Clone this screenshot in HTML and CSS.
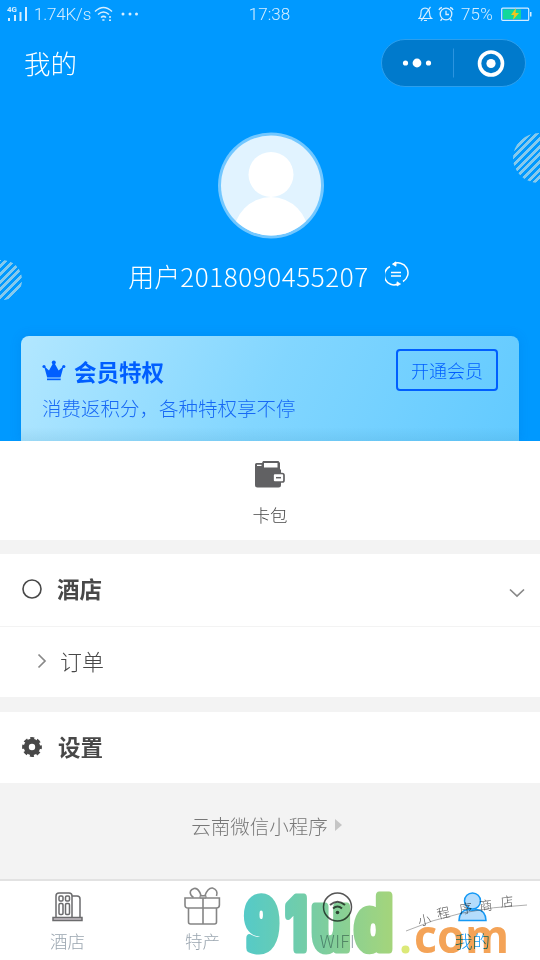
FILE: index.html
```
<!DOCTYPE html>
<html lang="zh-CN">
<head>
<meta charset="utf-8">
<title>我的</title>
<link rel="stylesheet" href="styles.css">
</head>
<body>
<header class="hero">
  <div class="status">
    <div class="status-left">
      <svg width="22" height="16" viewBox="0 0 22 16" fill="#d5eeff"><text x="0" y="6" class="net">4G</text><path d="M1 12h2v3H1zM7 9h2v6H7zM12.500 6h2v9h-2zM18 1h2v14h-2z"/></svg>
      <span class="speed">1.74K/s</span>
      <svg class="wifi" width="20" height="16" viewBox="0 0 20 16" fill="none" stroke="#d5eeff" stroke-width="1.500"><path d="M1 5.500Q9.500-2.500 18 5.500M4 8.500q5.500-5 11 0M7 11.500q2.500-2.200 5 0"/><path d="M8.300 14h2.200M15 11h2M15 14.200h2"/></svg>
      <svg width="18" height="4" viewBox="0 0 18 4" fill="#d5eeff"><circle cx="2" cy="2" r="1.500"/><circle cx="9" cy="2" r="1.500"/><circle cx="15.500" cy="2" r="1.500"/></svg>
    </div>
    <span class="clock">17:38</span>
    <div class="status-right">
      <svg width="15" height="16" viewBox="0 0 15 16" fill="none" stroke="#d5eeff" stroke-width="1.200"><path d="M1 12.500q2-1.500 2-6 0-4 4-4.500 4.500.5 4.500 5 0 4 2 5.500zM6 14.500h3M12.500.8 3 15"/></svg>
      <svg width="16" height="16" viewBox="0 0 16 16" fill="none" stroke="#d5eeff" stroke-width="1.300"><circle cx="8" cy="8" r="5.800"/><path d="M8 4.800V8.500h3M1 4q.5-2 3-2.500M15 4q-.5-2-3-2.500M4 13l-1.500 1.700M12 13l1.500 1.700"/></svg>
      <span class="percent">75%</span>
      <svg width="31" height="15" viewBox="0 0 31 15"><rect x=".7" y="1.200" width="27" height="12.200" rx="1" fill="none" stroke="#d5eeff" stroke-width="1.200"/><path d="M2 2.500h18v9.600H2z" fill="#12d89b"/><path d="M29 5h1.500v4.500H29z" fill="#d5eeff"/><path d="m15 1-5 7h3l-1 5 6-7h-3.500z" fill="#f4c51c"/></svg>
    </div>
  </div>
  <div class="nav">
    <h1>我的</h1>
    <div class="capsule">
      <svg width="143" height="46" viewBox="0 0 143 46"><g fill="#fff"><circle cx="23.500" cy="23" r="2.600"/><circle cx="35" cy="23" r="4.400"/><circle cx="46.500" cy="23" r="2.600"/><circle cx="109" cy="23.500" r="4.600"/></g><path d="M71.500 8.500v29" stroke="#2c94df"/><circle cx="109" cy="23.500" r="11.500" fill="none" stroke="#fff" stroke-width="3.600"/></svg>
    </div>
  </div>
  <svg class="avatar" width="106" height="107" viewBox="0 0 106 107">
    <defs><clipPath id="face"><circle cx="53" cy="53.500" r="50"/></clipPath></defs>
    <circle cx="53" cy="53.500" r="53" fill="#72c7ff"/><circle cx="53" cy="53.500" r="50" fill="#e1f3ff"/>
    <g clip-path="url(#face)" fill="#fff"><circle cx="53" cy="42.500" r="22.500"/><ellipse cx="53" cy="103" rx="37.500" ry="38"/></g>
  </svg>
  <div class="user">
    <span>用户<b>2018090455207</b></span>
    <svg width="24" height="26" viewBox="0 0 24 26" fill="none" stroke="#fff" stroke-width="1.500"><path d="M5 5.500A9.500 9.500 0 0 0 13 23M8 3.200A9.500 9.500 0 0 1 18 20.500M6 11.500h10M6 15h10"/><path d="m11 .8-3.500 2.400L11 5.200zM12 20.800l3.500 2.200-3.500 2z" fill="#fff" stroke-width=".8"/></svg>
  </div>
  <i class="stripe stripe-right"></i>
  <i class="stripe stripe-left"></i>
  <section class="member">
    <div class="member-copy">
      <h2><svg width="24" height="22" viewBox="0 0 24 22" fill="#005eff"><path d="m2 6 5 4.500 4.200-7.500h1.200l4.200 7.500L21.700 6l-3.200 11.500H5.200z"/><circle cx="11.800" cy="2.600" r="2"/><circle cx="2" cy="6.500" r="1.600"/><circle cx="21.800" cy="6.500" r="1.600"/><path d="M5 18.500h13.700v1.700H5z"/></svg>会员特权</h2>
      <p>消费返积分，各种特权享不停</p>
    </div>
    <button>开通会员</button>
  </section>
</header>
<main>
  <section class="wallet">
    <svg width="30" height="28" viewBox="0 0 30 28"><path d="M0 3.500Q0 2 1.500 2H7l1-2h15.500L25 2v6.500h1V24q0 2.500-2.500 2.500h-21Q0 26.500 0 24z" fill="#616163"/><path d="M9 6.500V2h13.500v4.500zM2 5V3.800h4.500V5z" fill="#fff"/><rect x="18" y="12.500" width="11" height="8.500" rx="1.800" fill="#fff" stroke="#616163" stroke-width="1.700"/><path d="M21 16.700h5" stroke="#616163" stroke-width="1.500"/></svg>
    <span>卡包</span>
  </section>
  <section class="row hotel">
    <svg width="20" height="20" viewBox="0 0 20 20"><circle cx="10" cy="10" r="9" fill="none" stroke="#484848" stroke-width="1.600"/></svg>
    <h3>酒店</h3>
    <svg class="chevron" width="16" height="10" viewBox="0 0 16 10" fill="none" stroke="#888" stroke-width="1.700"><path d="m1 1.500 7 6.500 7-6.500"/></svg>
  </section>
  <section class="row order">
    <svg width="10" height="16" viewBox="0 0 10 16" fill="none" stroke="#888" stroke-width="1.700"><path d="m1.500 1.500 6.500 6.500-6.500 6.500"/></svg>
    <span>订单</span>
  </section>
  <section class="row settings">
    <svg width="20" height="20" viewBox="0 0 20 20"><circle cx="10" cy="10" r="5.700" fill="none" stroke="#484848" stroke-width="5"/><circle cx="10" cy="10" r="8.400" fill="none" stroke="#484848" stroke-width="3" stroke-dasharray="3.900 2.697" stroke-dashoffset="1.950"/></svg>
    <h3>设置</h3>
  </section>
  <div class="credit">云南微信小程序<svg width="9" height="14" viewBox="0 0 9 14"><path d="m1 1 7 6-7 6z" fill="#c5c5c5"/></svg></div>
</main>
<nav class="tabs">
  <a class="tab"><svg width="36" height="40" viewBox="0 0 36 40" fill="none" stroke="#6b6b6d" stroke-width="1.500"><path d="M6 36V15q0-3 3-3h10q3 0 3 3v21M22 15h5q3 0 3 3v18"/><rect x="9" y="15" width="4" height="5" rx="1.200"/><rect x="15.500" y="15" width="4" height="5" rx="1.200"/><rect x="9" y="22.500" width="4" height="11" rx="1.200"/><rect x="15.500" y="22.500" width="4" height="11" rx="1.200"/><path d="M3 36.500h29v3H3z" fill="#c8c2c8"/></svg><span>酒店</span></a>
  <a class="tab"><svg width="36" height="40" viewBox="0 0 36 40" fill="none" stroke="#858585" stroke-width="1.600"><path d="M0 17h34.400v7q0 3-3 3H3q-3 0-3-3zM3.500 27v14q0 2 2 2h24q2 0 2-2V27M18 17v26"/><path d="M16 14.500Q13.500 6.500 9 7.500 3.500 9.500 6 14q1 1.500 2.500 2.500M20 14.500q3-8 7.500-7.500 6 2 4 8"/><path d="M15 14.500h6V17h-6z" fill="#bbb" stroke-width="1"/></svg><span>特产</span></a>
  <a class="tab"><svg width="36" height="40" viewBox="0 0 36 40" fill="none" stroke="#555" stroke-width="1.500"><circle cx="17.500" cy="26" r="14"/><path d="M10 24q7.500-6.500 15 0M13 27.500q4.500-4 9 0" stroke-width="2"/><circle cx="17.500" cy="31.500" r="1.800" fill="#555" stroke="none"/></svg><span class="wide">WIFI</span></a>
  <a class="tab active"><svg width="36" height="40" viewBox="0 0 36 40" fill="#b4dcfc" stroke="#1599f5" stroke-width="1.500"><circle cx="17.500" cy="20" r="8"/><path d="M4 39.500Q4.500 29 13.500 28.500q4 1.500 8 0 9 .5 9.500 11z"/></svg><span>我的</span></a>
  <svg class="brand" width="300" height="81" viewBox="240 879 300 81">
    <defs><linearGradient id="brand-fill" gradientUnits="userSpaceOnUse" x1="243" y1="0" x2="393" y2="0"><stop offset="0" stop-color="#3dc3c1"/><stop offset=".5" stop-color="#68c795"/><stop offset="1" stop-color="#99cf69"/></linearGradient></defs>
    <g class="brand-name" fill="url(#brand-fill)" stroke="url(#brand-fill)">
      <text x="244.500" y="949" textLength="35" lengthAdjust="spacingAndGlyphs">9</text>
      <text class="one" x="286" y="949" textLength="21" lengthAdjust="spacingAndGlyphs">1</text>
      <text class="tall" x="310.500" y="949" textLength="41" lengthAdjust="spacingAndGlyphs">u</text>
      <text x="354.500" y="949" textLength="39" lengthAdjust="spacingAndGlyphs">d</text>
    </g>
    <circle cx="405.500" cy="949.500" r="4" fill="#dce978"/>
    <text class="brand-com" x="414" y="953" textLength="95" lengthAdjust="spacingAndGlyphs">com</text>
    <path d="M406 931q52-23 121-26" fill="none" stroke="#999" stroke-width=".8"/>
    <g class="script"><text transform="translate(419 926) rotate(-12)">小</text><text transform="translate(438 919) rotate(-12)">程</text><text transform="translate(460 914) rotate(-8)">序</text><text transform="translate(480 911) rotate(-7)">商</text><text transform="translate(501 907) rotate(-6)">店</text></g>
  </svg>
</nav>
</body>
</html>
```
FILE: styles.css
```
* { box-sizing: border-box; }
body { margin: 0; width: 540px; height: 960px; overflow: hidden; display: flex; flex-direction: column; background: #f3f3f3; color: #484848; font-family: "Noto Sans CJK SC", sans-serif; font-weight: 300; }
h1, h2, h3, p { margin: 0; }
svg { display: block; flex: none; }
.hero { position: relative; height: 441px; overflow: hidden; background: #0099ff; color: #fff; display: flex; flex-direction: column; align-items: center; flex: none; }
.status { width: 100%; height: 28px; padding: 0 8px 0 7px; display: grid; grid-template-columns: 1fr auto 1fr; align-items: center; color: #d5eeff; font-family: Roboto, sans-serif; font-size: 17px; flex: none; }
.status-left, .status-right { display: flex; align-items: center; }
.net { font: 700 8px Roboto, sans-serif; }
.status-left svg:first-child { margin-top: -1px; overflow: visible; }
.speed { margin-left: 5px; width: 56px; letter-spacing: -.2px; }
.wifi { margin: 0 7px 0 4px; }
.status-right { justify-content: flex-end; gap: 5px; }
.percent { margin: 0 3px 0 2px; letter-spacing: .2px; }
.nav { width: 100%; height: 70px; padding: 11px 14px 0 24px; display: flex; justify-content: space-between; align-items: flex-start; flex: none; }
.nav h1 { font-size: 26.500px; line-height: 47px; font-weight: 300; }
.capsule { width: 145px; height: 48px; border: 1px solid #2c9fed; border-radius: 24px; background: #007acc; }
.avatar { margin: 34px 0 0 1px; }
.user { display: flex; align-items: center; gap: 16px; margin: 18px 3px 0 0; height: 38px; font-size: 26px; line-height: 38px; }
.user b { font-weight: 300; letter-spacing: .6px; }
.user svg { margin-top: -4px; }
.stripe { position: absolute; border-radius: 50%; background: repeating-linear-gradient(135deg, #86c9ec 0 2.800px, #0099ff 2.800px 5.400px); }
.stripe-right { width: 52px; height: 50px; left: 513px; top: 133px; }
.stripe-left { width: 40px; height: 40px; left: -18px; top: 260px; }
.member { width: 498px; height: 105px; margin-top: 41px; padding: 13px 21px 0; display: flex; justify-content: space-between; align-items: flex-start; border-radius: 8px 8px 0 0; background: linear-gradient(0deg, rgba(0,80,120,.08), transparent 14px), linear-gradient(115deg, #b2e7ff, #82d6ff 50%, #62caff); box-shadow: 0 0 12px rgba(0,80,180,.16); color: #005eff; }
.member h2 { display: flex; gap: 8px; align-items: center; height: 43px; font-size: 22.500px; font-weight: 700; }
.member p { margin-top: 1px; font-size: 19.500px; line-height: 30px; white-space: nowrap; color: #1769f5; }
.member button { width: 102px; height: 42px; padding: 0; border: 2px solid #005eff; border-radius: 4px; background: none; color: #005eff; font: 300 18px "Noto Sans CJK SC", sans-serif; }
main { flex: 1; display: flex; flex-direction: column; }
.wallet { height: 99px; padding-top: 20px; background: #fff; display: flex; flex-direction: column; align-items: center; gap: 12px; font-size: 17.500px; line-height: 27px; }
.row { display: flex; align-items: center; background: #fff; }
.row h3 { font-size: 22.500px; line-height: 34px; font-weight: 700; margin: -1px 0 0 -1px; }
.hotel { height: 72px; margin-top: 14px; padding: 0 15px 3px 22px; gap: 16px; }
.chevron { margin: 9px 0 0 auto; }
.order { height: 70px; margin-top: 1px; padding: 0 0 2px 37px; gap: 13px; font-size: 22px; }
.order span { margin-top: -3px; }
.settings { height: 71px; margin-top: 15px; padding: 0 22px 2px; gap: 16px; }
.settings h3 { margin-left: 0; }
.credit { height: 84px; padding-right: 6px; display: flex; align-items: center; justify-content: center; gap: 6px; font-size: 19.500px; color: #777; }
.tabs { position: relative; height: 81px; border-top: 2px solid #e2e2e2; background: #fff; display: grid; grid-template-columns: repeat(4, 1fr); flex: none; }
.tab { display: flex; flex-direction: column; align-items: center; font-size: 17.500px; line-height: 26px; color: #9aa5af; }
.tab svg { overflow: visible; }
.tab span { margin-top: 7px; }
.wide { letter-spacing: .4px; }
.active { color: #1599f5; }
.brand { position: absolute; left: 240px; top: -2px; mix-blend-mode: multiply; }
.brand-name { font: 700 70px "DejaVu Sans", sans-serif; stroke-width: 9px; stroke-linejoin: round; opacity: .88; }
.one { font-family: Inter, sans-serif; }
.tall { font-size: 76px; }
.brand-com { font: 700 46px "Open Sans", sans-serif; fill: #f39a45; opacity: .9; }
.script { font: 300 13px "Noto Sans CJK SC", sans-serif; fill: #555; }
```
